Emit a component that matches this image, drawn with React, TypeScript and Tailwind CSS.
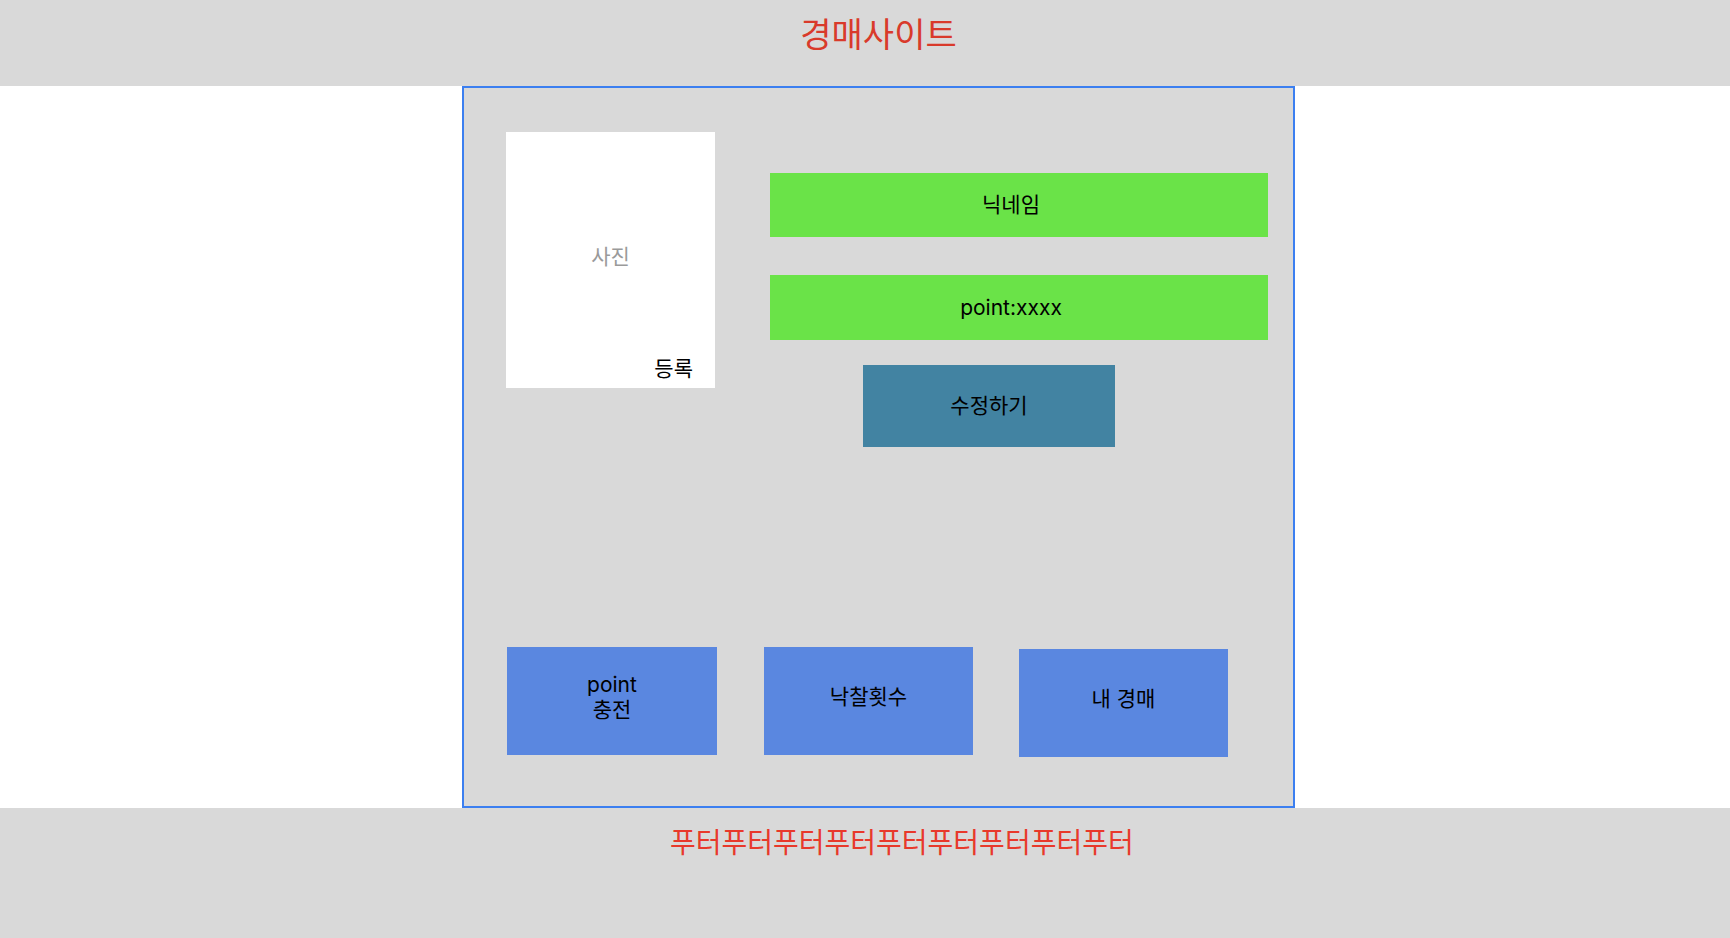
export default function App() {
  return (
    <div
      className="w-[1730px] h-[938px] bg-white flex flex-col overflow-hidden"
      style={{ fontFamily: "Inter, 'Noto Sans CJK KR', sans-serif" }}
    >
      {/* Header */}
      <header className="h-[86px] shrink-0 bg-[#d9d9d9]">
        <div className="ml-[462px] w-[833px] flex justify-center pt-[12px]">
          <h1 className="text-[34px] leading-[46px] text-[#d93a2b]">경매사이트</h1>
        </div>
      </header>

      {/* Main card */}
      <main className="ml-[462px] w-[833px] h-[722px] shrink-0 border-2 border-[#3c7ff0] bg-[#d9d9d9] pl-[42px]">
        <div className="flex pt-[44px]">
          {/* Photo */}
          <div className="w-[209px] h-[256px] bg-white flex flex-col">
            <div className="flex-1 flex items-center justify-center pt-[26px] text-[21px] text-[#9a9a9a]">
              사진
            </div>
            <div className="flex justify-end pr-[22px] pb-[6px] text-[21px] leading-[26px] text-black">
              등록
            </div>
          </div>

          {/* Profile info */}
          <div className="ml-[55px] w-[498px] pt-[41px] flex flex-col">
            <div className="h-[64px] bg-[#6ae348] flex items-center justify-center pr-[16px] text-[21px] text-black">
              닉네임
            </div>
            <div className="mt-[38px] h-[65px] bg-[#6ae348] flex items-center justify-center pr-[16px] text-[21px] text-black">
              point:xxxx
            </div>
            <button className="mt-[25px] ml-[93px] w-[252px] h-[82px] bg-[#4283a2] flex items-center justify-center text-[21px] text-black">
              수정하기
            </button>
          </div>
        </div>

        {/* Bottom actions */}
        <div className="mt-[200px] ml-px flex items-start">
          <button className="w-[210px] h-[108px] bg-[#5a87e0] flex flex-col items-center justify-center pb-[8px] text-[21px] leading-[25px] text-black">
            <span>point</span>
            <span>충전</span>
          </button>
          <button className="ml-[47px] w-[209px] h-[108px] bg-[#5a87e0] flex items-center justify-center pb-[8px] text-[21px] text-black">
            낙찰횟수
          </button>
          <button className="ml-[46px] mt-[2px] w-[209px] h-[108px] bg-[#5a87e0] flex items-center justify-center pb-[8px] text-[21px] text-black">
            내 경매
          </button>
        </div>
      </main>

      {/* Footer */}
      <footer className="flex-1 bg-[#d9d9d9] pl-[670px] pt-[16px]">
        <p className="text-[28px] leading-[38px] text-[#e8392b]">푸터푸터푸터푸터푸터푸터푸터푸터푸터</p>
      </footer>
    </div>
  );
}
